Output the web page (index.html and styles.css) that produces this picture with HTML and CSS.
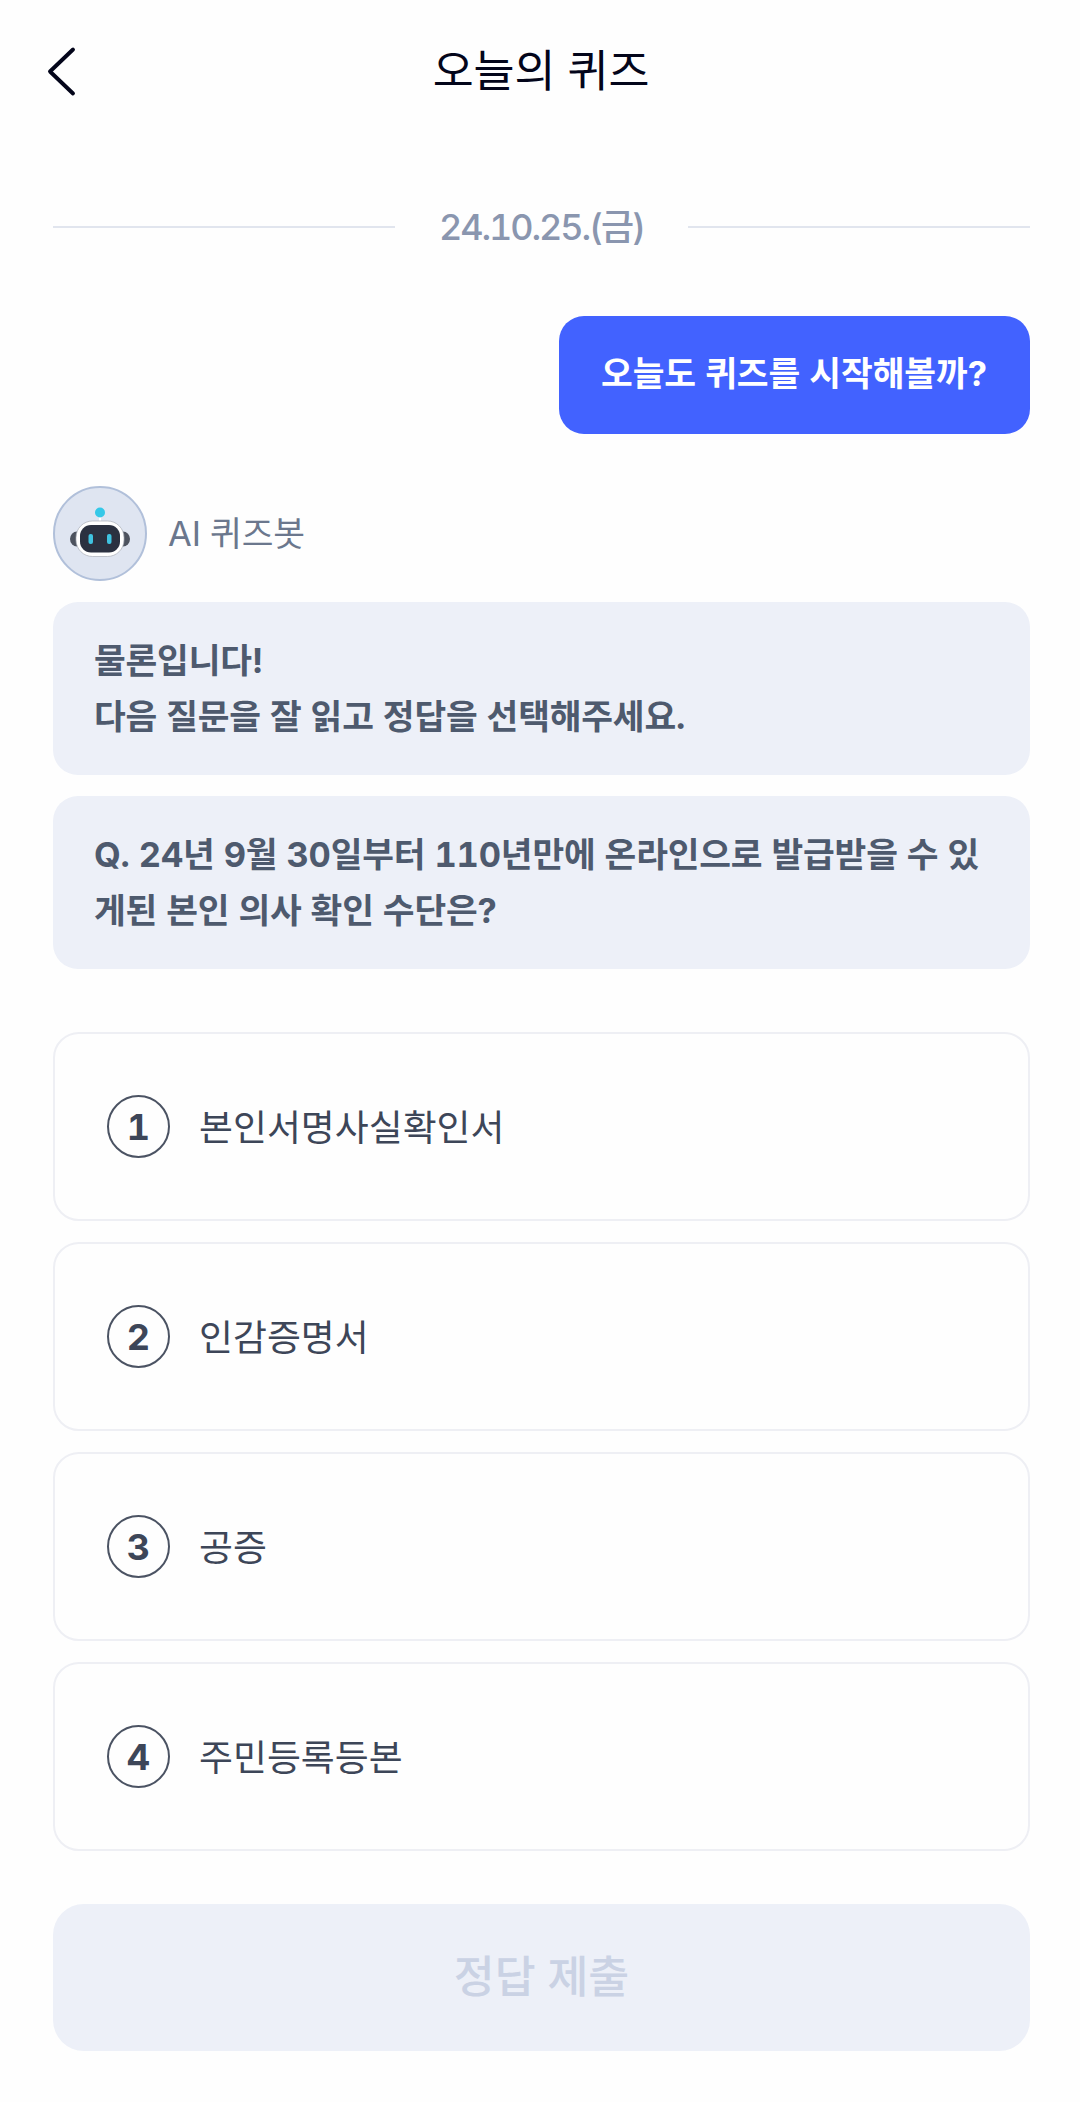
FILE: index.html
```html
<!DOCTYPE html>
<html lang="ko">
<head>
  <meta charset="UTF-8" />
  <meta name="viewport" content="width=device-width, initial-scale=1.0" />
  <title>오늘의 퀴즈</title>
  <link rel="stylesheet" href="styles.css">
</head>
<body>
  <header>
    <button class="back" aria-label="뒤로">
      <svg width="34" height="54" viewBox="0 0 34 54" fill="none">
        <path d="M29 5.5 L6 27.5 L29 49.5" stroke="#03051a" stroke-width="3.9" stroke-linecap="round" stroke-linejoin="round" />
      </svg>
    </button>
    <h1>오늘의 퀴즈</h1>
  </header>

  <main>
    <div class="date"><span>24.10.25.(금)</span></div>

    <p class="bubble mine">오늘도 퀴즈를 시작해볼까?</p>

    <div class="bot">
      <svg class="avatar" width="94" height="95" viewBox="0 0 94 95">
        <ellipse cx="47" cy="47.5" rx="46" ry="46.5" fill="#dfe5f1" stroke="#b1c0da" stroke-width="2" />
        <ellipse cx="24" cy="53" rx="7" ry="7.5" fill="#4d535f" />
        <ellipse cx="70" cy="53" rx="7" ry="7.5" fill="#4d535f" />
        <rect x="46" y="29" width="2" height="8" fill="#fff" />
        <circle cx="47" cy="26.5" r="5" fill="#35c8e8" />
        <rect x="23" y="35" width="48" height="35.5" rx="16.5" fill="#fff" stroke="#a9adb6" stroke-width="0.7" />
        <rect x="27" y="39" width="40" height="27.5" rx="11" fill="#2b3140" />
        <rect x="35.5" y="48" width="4.5" height="10" rx="2" fill="#3fc3e0" />
        <rect x="54" y="48" width="4.5" height="10" rx="2" fill="#3fc3e0" />
      </svg>
      <span class="bot-name">AI 퀴즈봇</span>
    </div>

    <p class="bubble">물론입니다!<br>다음 질문을 잘 읽고 정답을 선택해주세요.</p>
    <p class="bubble">Q. 24년 9월 30일부터 110년만에 온라인으로 발급받을 수 있<br>게된 본인 의사 확인 수단은?</p>

    <ol class="options">
      <li><span class="num">1</span><span class="label">본인서명사실확인서</span></li>
      <li><span class="num">2</span><span class="label">인감증명서</span></li>
      <li><span class="num">3</span><span class="label">공증</span></li>
      <li><span class="num">4</span><span class="label">주민등록등본</span></li>
    </ol>

    <button class="submit" disabled>정답 제출</button>
  </main>
</body>
</html>
```
FILE: styles.css
```css
:root {
  --text: #3d4658;
  --bubble-text: #4e5a6e;
  --bubble-bg: #edf0f8;
  --blue: #4262ff;
}
* {
  box-sizing: border-box;
}
body {
  margin: 0;
  background-color: #fefefe;
  color: var(--text);
  font-family: Inter, "Noto Sans CJK KR", sans-serif;
  font-variant-numeric: tabular-nums;
}
button {
  border: none;
  background: none;
  padding: 0;
  font-family: inherit;
}

header {
  display: grid;
  grid-template-columns: 90px 1fr 88px;
  align-items: center;
  height: 142px;
}
.back {
  justify-self: end;
  width: 46px;
  height: 54px;
  text-align: left;
}
.back svg {
  display: block;
}
h1 {
  margin: 0;
  font-size: 44.5px;
  font-weight: 400;
  line-height: 60px;
  text-align: center;
  color: #03051a;
}

main {
  padding: 0 50px 0 53px;
}

.date {
  display: flex;
  align-items: center;
  gap: 44px;
  height: 60px;
  margin-top: 55px;
  font-size: 36px;
  font-weight: 500;
  letter-spacing: -2.1px;
  color: #8a96af;
}
.date span {
  padding-bottom: 7px;
}
.date::before,
.date::after {
  content: "";
  flex: 1;
  height: 2px;
  background-color: #e1e5ee;
}

.bubble {
  height: 173px;
  margin: 0 0 21px;
  padding: 31px 41px;
  border-radius: 25px;
  background-color: var(--bubble-bg);
  color: var(--bubble-text);
  font-size: 34.5px;
  font-weight: 700;
  line-height: 55.5px;
  letter-spacing: -0.18px;
  white-space: nowrap;
}
.mine {
  width: 471px;
  height: 118px;
  margin: 59px 0 52px auto;
  padding: 30px 42px;
  letter-spacing: -0.08px;
  background-color: var(--blue);
  color: #fff;
}

.bot {
  display: flex;
  align-items: center;
  gap: 21px;
  margin-bottom: 21px;
}
.bot-name {
  padding-bottom: 5px;
  font-size: 34.5px;
  letter-spacing: -0.1px;
  color: #6b778d;
}

.options {
  list-style: none;
  margin: 63px 0 53px;
  padding: 0;
  display: grid;
  gap: 21px;
}
.options li {
  display: flex;
  align-items: center;
  gap: 29px;
  height: 189px;
  padding-left: 52px;
  border: 2px solid #eeeff4;
  border-radius: 26px;
}
.num {
  display: flex;
  align-items: center;
  justify-content: center;
  width: 63px;
  height: 63px;
  border: 2px solid #4b5363;
  border-radius: 50%;
  font-size: 36px;
  font-weight: 700;
}
.label {
  padding-bottom: 4px;
  font-size: 36.9px;
}

.submit {
  display: block;
  width: 100%;
  height: 147px;
  padding-bottom: 8px;
  border-radius: 31px;
  background-color: var(--bubble-bg);
  color: #cad2e4;
  font-size: 44.5px;
  font-weight: 500;
}
```
